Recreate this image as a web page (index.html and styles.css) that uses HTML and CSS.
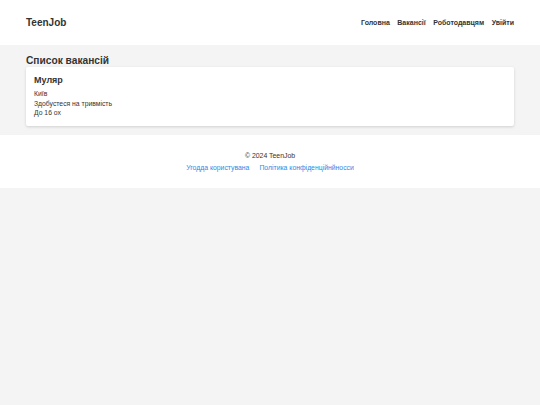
FILE: index.html
```html
<!DOCTYPE html>
<html lang="uk">
<head>
<meta charset="utf-8">
<title>TeenJob</title>
<link rel="stylesheet" href="styles.css">
</head>
<body>
<header class="header">
  <div class="logo">TeenJob</div>
  <nav class="nav">
    <a href="#">Головна</a>
    <a href="#">Вакансії</a>
    <a href="#">Роботодавцям</a>
    <a href="#">Увійти</a>
  </nav>
</header>
<main class="main">
  <h1 class="title">Список вакансій</h1>
  <div class="card">
    <h2 class="card-title">Муляр</h2>
    <p class="card-line">Київ</p>
    <p class="card-line">Здобустеся на тривміcть</p>
    <p class="card-line">До 16 ох</p>
  </div>
</main>
<footer class="footer">
  <p class="copy">© 2024 TeenJob</p>
  <div class="links">
    <a href="#">Угодда користувана</a>
    <a href="#">Політика конфіденційнйносси</a>
  </div>
</footer>
</body>
</html>
```
FILE: styles.css
```css
html, body {
  margin: 0;
  padding: 0;
  background: #f4f4f4;
  font-family: "Liberation Sans", Arial, sans-serif;
  color: #333;
}
.header {
  background: #fff;
  height: 45px;
  display: flex;
  align-items: center;
  justify-content: space-between;
  padding: 0 26px;
}
.logo {
  font-size: 10px;
  font-weight: bold;
  color: #333;
}
.nav {
  display: flex;
  gap: 7.5px;
}
.nav a {
  font-size: 7px;
  font-weight: bold;
  color: #333;
  text-decoration: none;
}
.main {
  padding: 9px 26px 9px;
}
.title {
  font-size: 10.2px;
  font-weight: bold;
  margin: 0;
  line-height: 13px;
}
.card {
  background: #fff;
  border-radius: 2px;
  box-shadow: 0 1px 3px rgba(0,0,0,0.15);
  padding: 8px 8px 8px;
}
.card-title {
  font-size: 9px;
  font-weight: bold;
  margin: 0 0 3px;
  line-height: 11px;
}
.card-line {
  font-size: 6.8px;
  margin: 0;
  line-height: 9.5px;
  color: #333;
}
.footer {
  background: #fff;
  height: 53px;
  box-sizing: border-box;
  padding-top: 16px;
  text-align: center;
}
.copy {
  font-size: 6.9px;
  margin: 0 0 3px;
  line-height: 9px;
}
.links {
  display: flex;
  justify-content: center;
  gap: 10px;
}
.links a {
  font-size: 6.85px;
  color: #2b8ae6;
  text-decoration: none;
  line-height: 9px;
}
```
